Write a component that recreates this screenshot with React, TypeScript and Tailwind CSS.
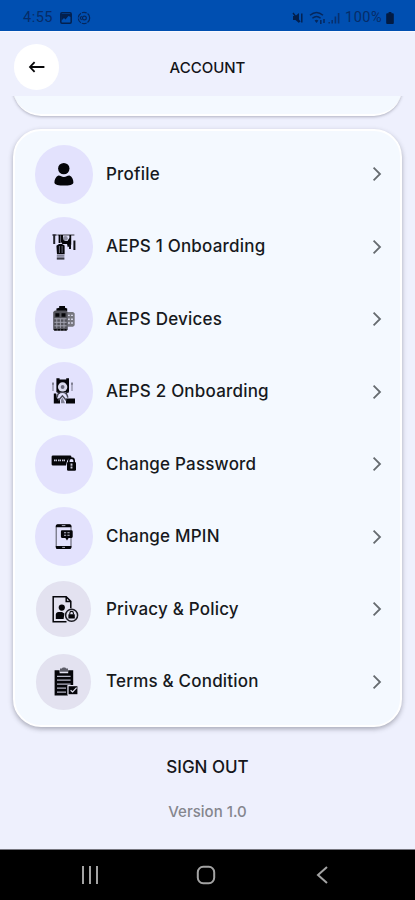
import React from 'react';

import cn from 'clsx';

type MenuItem = {
  label: string;
  icon: React.ReactNode;
  muted?: boolean;
};

const Icon = ({ children }: { children: React.ReactNode }) => (
  <svg viewBox="0 0 32 32" className="h-8 w-8" fill="#050509">
    {children}
  </svg>
);

const ProfileIcon = () => (
  <Icon>
    <circle cx="15.8" cy="10.6" r="5.7" />
    <path d="M10.4 17.6C13 17.6 13.5 19 15.9 19S18.9 17.6 21.4 17.6C24 18.6 25.4 21.8 25.4 24.4C25.4 26.8 21 27.6 16 27.6S6.4 26.8 6.4 24.4C6.4 21.8 8 18.6 10.4 17.6Z" />
  </Icon>
);

const OnboardingOneIcon = () => (
  <Icon>
    <path d="M4.4 4h4.2" stroke="#33333e" strokeWidth="1.4" />
    <path d="M6.2 3.6v9.4" stroke="#22222b" strokeWidth="2" />
    <path d="M9.4 4h17" stroke="#55555f" strokeWidth="1.2" />
    <path d="M10.6 4h2v8h-2zM13 4h2v3l2 3h2.4l2-3V4h1.8v9.8l-3.4 2.4-.8-3.2h-4.6l-1.4-2z" />
    <circle cx="17.4" cy="7.4" r="2.4" fill="#8d8da0" />
    <path d="M8.4 14.8l2.6-1.8h3l2.6 1.6v8.6H9z" />
    <path d="M11.4 15v7M14.1 15v7" stroke="#85859a" strokeWidth=".8" />
    <path d="M8.8 23.8h7.6v2H8.8z" fill="#85859a" />
    <path d="M8.8 26.4h7.6v2.2H8.8z" fill="#3a3a45" />
    <path d="M22 13v5M26.4 9.4v9.6" stroke="#101016" strokeWidth="2" />
  </Icon>
);

const DevicesIcon = () => (
  <Icon>
    <path d="M19.5 9h5.6l1.6 1.6v11.6l-1.6 1.6h-5.6z" fill="#77777f" />
    <path d="M19.8 12.4h6M19.8 16.2h6M19.8 20h6" stroke="#d3d3e6" strokeWidth="1.4" strokeDasharray="2 1.2" />
    <path d="M8.4 8V5.6l2.8-.8V3h5.8v1.8l2.2.8V8z" />
    <path d="M5.2 9l1.8-1.4h11.2l1.6 1.4v17.4l-1.2 1.4H6.4l-1.2-1.4z" fill="#54545c" />
    <path d="M7.4 10.2h4v3.6h-4zM13.5 10.2h4v3.6h-4z" />
    <path d="M6.4 15.8h12.2M6.4 19.3h12.2M6.4 22.8h12.2" stroke="#a4a4b2" strokeWidth="1" />
    <path d="M8.8 15.6v9.6M12.4 15.6v9.6M16 15.6v9.6" stroke="#a4a4b2" strokeWidth=".9" />
    <path d="M6.2 26.8h12.4" stroke="#050509" strokeWidth="1.6" strokeDasharray="2.6 .8" />
  </Icon>
);

const OnboardingTwoIcon = () => (
  <Icon>
    <path d="M8.4 2.2h3.2v1.4h6.6V2.2h2.8v13.8H8.4z" />
    <circle cx="14.6" cy="11" r="4.7" fill="#d9d9ed" />
    <circle cx="14.6" cy="11" r="1.9" fill="#66667a" />
    <path d="M5 15V6.4M24 15V6.4" stroke="#77778a" strokeWidth="1" />
    <path d="M4 8.4l1-2.2 1 2.2zM23 8.4l1-2.2 1 2.2z" fill="#5b5b68" />
    <path d="M5.8 17.4h2.4l.8 5 3 .2v4.8H5.8zM18 22.4h9v5h-9z" />
    <path d="M9.2 21.4c0-3 2-5.2 5.2-5.2s5 2.2 5.4 5.4M10.4 24.4l4-4.6 4 4.6" fill="none" stroke="#4c4c59" strokeWidth="1.5" />
    <path d="M13 23.4l1.6-1.6 2.4 5.4h-4z" fill="#85859a" />
    <path d="M8.8 15.6l3 1.6M20.8 15.6l-3 1.6" stroke="#22222b" strokeWidth="1.4" />
  </Icon>
);

const PasswordIcon = () => (
  <Icon>
    <path d="M5 7.4h17a1.4 1.4 0 011.4 1.4v.9c-2.6.2-4.2 1.8-4.6 4.4l-.8 3.5H5a1.4 1.4 0 01-1.4-1.4V8.8A1.4 1.4 0 015 7.4z" />
    <path d="M6 12.4h3M10 12.4h3M14 12.4h3" stroke="#c9c9dc" strokeWidth="1.8" strokeDasharray="1.3 .4" />
    <path d="M20.8 14.6v-1.8a2.7 2.7 0 015.4 0v1.8" fill="none" stroke="#050509" strokeWidth="1.6" />
    <rect x="19" y="14" width="9" height="8.8" rx="1.2" />
    <path d="M23.5 15.6v5" stroke="#c9c9dc" strokeWidth="1.9" strokeDasharray="2.2 .6" />
  </Icon>
);

const MpinIcon = () => (
  <Icon>
    <rect x="8.2" y="4" width="14.8" height="23.4" rx="1.8" fill="none" stroke="#55555f" strokeWidth="1" />
    <path d="M9.4 3.2h12.4a1.6 1.6 0 011.6 1.6v1.4H7.8V4.8a1.6 1.6 0 011.6-1.6zM7.8 25h15.6v1.4a1.6 1.6 0 01-1.6 1.6H9.4a1.6 1.6 0 01-1.6-1.6z" />
    <path d="M13.8 4.6h3.6M14.2 26.4h2.8" stroke="#bdbdce" strokeWidth=".9" />
    <path d="M14 9.3h9.6a1.1 1.1 0 011.1 1.1v5.4a1.1 1.1 0 01-1.1 1.1h-3L19 19.4l-1.6-2.5H14a1.1 1.1 0 01-1.1-1.1v-5.4A1.1 1.1 0 0114 9.3z" />
    <path d="M16 11.8h5.8M16 14.2h5.8" stroke="#c4c4d6" strokeWidth="1.1" strokeDasharray="2.2 1.2" />
  </Icon>
);

const PrivacyIcon = () => (
  <Icon>
    <path d="M18.5 28.8H5.2V3.8h13l4.6 4.6v6.8M18.2 3.8v4.6h4.6" fill="none" stroke="#050509" strokeWidth="1.5" />
    <circle cx="13.8" cy="14.6" r="3.1" />
    <path d="M7.8 26v-4.4a2.8 2.8 0 012.8-2.6h3.4l2.4 1.4-.8 5.6z" />
    <circle cx="23.6" cy="22.3" r="6" fill="#e3e2f0" stroke="#1b1b22" strokeWidth="1.5" />
    <path d="M21.8 21.6v-1.4a1.8 1.8 0 013.6 0v1.4" fill="none" stroke="#050509" strokeWidth="1.1" />
    <rect x="20.4" y="21.2" width="6.4" height="4.2" rx=".5" />
  </Icon>
);

const TermsIcon = () => (
  <Icon>
    <path d="M6.6 4.2h5v3h8.6v-3h5V19h-5.4v10.4H6.6z" />
    <path d="M12 2.6h1.8l1-1.2h2.4l1 1.2H20v3.2h-8z" fill="#5d5d68" />
    <path d="M9 10.4h13.6M9 14.2h13.6M9 18.2h13.6M9 22.2h9M9 26.2h9" stroke="#b5b5c6" strokeWidth="1.2" />
    <path d="M19.4 19.2h10.4v9.6H19.4z" fill="#e3e2f0" />
    <rect x="20.6" y="20.2" width="8.8" height="8" />
    <path d="M22.6 24.2l2 1.8 4-4.4" fill="none" stroke="#e3e2f0" strokeWidth="1.2" />
  </Icon>
);

const items: MenuItem[] = [
  { label: 'Profile', icon: <ProfileIcon /> },
  { label: 'AEPS 1 Onboarding', icon: <OnboardingOneIcon /> },
  { label: 'AEPS Devices', icon: <DevicesIcon /> },
  { label: 'AEPS 2 Onboarding', icon: <OnboardingTwoIcon /> },
  { label: 'Change Password', icon: <PasswordIcon /> },
  { label: 'Change MPIN', icon: <MpinIcon /> },
  { label: 'Privacy & Policy', icon: <PrivacyIcon />, muted: true },
  { label: 'Terms & Condition', icon: <TermsIcon />, muted: true },
];

const StatusBar = () => (
  <div className="flex h-[31px] shrink-0 items-center justify-between bg-[#004fb1] pt-1 pr-[21px] pl-[23px] font-[Roboto] text-[#062c68]">
    <div className="flex items-center">
      <span className="w-[37px] pt-0.5 text-[14.5px] leading-none tracking-[0.5px]">4:55</span>
      <svg viewBox="0 0 12 12" className="h-3 w-3" fill="none">
        <rect x=".8" y=".8" width="10.4" height="10.4" rx="1.2" stroke="#03204e" strokeWidth="1.5" />
        <path d="M1 2h10v3L8.4 4 5.5 7.4 4 6 1.5 8.6z" fill="#03204e" />
      </svg>
      <svg viewBox="0 0 14 14" className="ml-[5px] h-3.5 w-3.5" fill="none" stroke="#05275c" strokeWidth="1.2">
        <circle cx="7" cy="7" r="5.7" strokeDasharray="5 1" />
        <circle cx="7.4" cy="7" r="1.9" />
        <path d="M4.6 5.2L3.2 7l1.4 1.8" />
      </svg>
    </div>
    <div className="flex items-center">
      <svg viewBox="0 0 12 12" className="h-3 w-3" fill="#031f4c">
        <path d="M1 4h2.4L7 1v10L3.4 8H1z" />
        <path d="M1 1l7 9M9.8 1.6v8.8" stroke="#031f4c" strokeWidth="1.4" />
      </svg>
      <svg viewBox="0 0 17 14" className="ml-[5px] h-3.5 w-[17px]" fill="none" stroke="#05275c" strokeWidth="1.5">
        <path d="M1 4.2c4-3.4 9-3.4 13 0M3.4 7.2c2.6-2.2 5.6-2.2 8.2 0" />
        <path d="M5.6 9.6L7.5 12l1.9-2.4a3 3 0 00-3.8 0z" fill="#05275c" stroke="none" />
        <path d="M11.8 9v4M15 8v4" />
      </svg>
      <svg viewBox="0 0 12 12" className="ml-[2px] h-3 w-3" fill="none" stroke="#07306e" strokeWidth="1.6">
        <path d="M1.2 10v1.6M4.2 8v3.6M7.4 4.6v7M10.6 1v10.6" />
      </svg>
      <span className="ml-[5px] w-[40px] pt-0.5 text-[14.5px] leading-none tracking-[0.5px] whitespace-nowrap">100%</span>
      <svg viewBox="0 0 8 12" className="ml-px h-3 w-2" fill="#021b43">
        <path d="M2.6 0h2.8v1.2h1.4a1 1 0 011 1V11a1 1 0 01-1 1H1.2a1 1 0 01-1-1V2.2a1 1 0 011-1h1.4z" />
      </svg>
    </div>
  </div>
);

const MenuRow = ({ label, icon, muted }: MenuItem) => (
  <button className="flex h-[72.5px] w-full items-center pr-[19.5px] pl-[21px] text-left">
    <span className="flex w-[59px] justify-center">
      <span
        className={cn(
          'flex items-center justify-center rounded-full',
          muted ? 'h-14 w-[55px] bg-[#e3e2f0]' : 'h-[59px] w-[58px] bg-[#e3e2fd]'
        )}
      >
        {icon}
      </span>
    </span>
    <span className="ml-[13px] flex-1 pt-px text-[17px] font-medium tracking-[0.2px] text-[#17191d]">
      {label}
    </span>
    <svg viewBox="0 0 12 18" className="h-[18px] w-3" fill="none" stroke="#666b70" strokeWidth="1.8">
      <path d="M2.6 2.6L9 9l-6.4 6.4" />
    </svg>
  </button>
);

const App = () => (
  <div className="flex h-[900px] w-[415px] flex-col overflow-hidden bg-[#eef0fd] font-[Inter,sans-serif]">
    <StatusBar />

    <header className="grid h-[65px] shrink-0 grid-cols-[46px_1fr_46px] items-center border-t border-[#f8f8ff] px-3.5">
      <button className="mt-1.5 flex h-[46px] w-[45px] items-center justify-center rounded-full bg-white">
        <svg viewBox="0 0 18 14" className="h-3.5 w-[18px]" fill="none" stroke="#08080a" strokeWidth="1.8">
          <path d="M16.4 7H2M6.6 2.2L2 7l4.6 4.8" />
        </svg>
      </button>
      <h1 className="mt-2 text-center text-[15px] font-medium text-[#121317]">ACCOUNT</h1>
    </header>

    <div className="h-[27px] shrink-0 overflow-hidden px-[13px]">
      <div className="-mt-10 h-[60px] rounded-[28px] border-b-2 border-white bg-[#f4f9ff] shadow-[0_1px_3px_rgba(60,60,80,0.35)]" />
    </div>

    <main className="mx-[13px] mt-[6px] h-[598px] shrink-0 rounded-[28px] border-2 border-white bg-[#f4f9ff] pt-[6.75px] shadow-[0_2px_5px_rgba(50,50,65,0.38)]">
      <div className="-mx-0.5">
        {items.map((item) => (
          <MenuRow key={item.label} {...item} />
        ))}
      </div>
    </main>

    <footer className="flex flex-1 flex-col items-center">
      <button className="mt-[28px] text-[17px] leading-6 font-medium text-[#15161a]">SIGN OUT</button>
      <p className="mt-[23px] text-[15px] leading-5 font-medium text-[#85868d]">Version 1.0</p>
    </footer>

    <nav className="flex h-[51px] shrink-0 items-center justify-between border-t border-[#777780] bg-black pr-[87px] pl-[81px]">
      <svg viewBox="0 0 18 18" className="h-[18px] w-[18px]" stroke="#a3a3a3" strokeWidth="2">
        <path d="M2 0v18M9 0v18M16 0v18" />
      </svg>
      <svg viewBox="0 0 20 20" className="mr-[3px] h-5 w-5" fill="none" stroke="#a3a3a3" strokeWidth="2">
        <rect x="1.8" y="1.8" width="16.4" height="16.4" rx="5.4" />
      </svg>
      <svg viewBox="0 0 12 18" className="h-[18px] w-3" fill="none" stroke="#a3a3a3" strokeWidth="2">
        <path d="M11 1L2 9l9 8" />
      </svg>
    </nav>
  </div>
);

export default App;
